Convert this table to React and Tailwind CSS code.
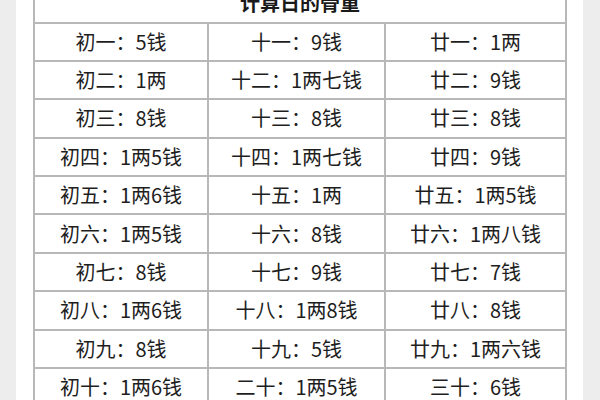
const rows = [
  ["初一：5钱", "十一：9钱", "廿一：1两"],
  ["初二：1两", "十二：1两七钱", "廿二：9钱"],
  ["初三：8钱", "十三：8钱", "廿三：8钱"],
  ["初四：1两5钱", "十四：1两七钱", "廿四：9钱"],
  ["初五：1两6钱", "十五：1两", "廿五：1两5钱"],
  ["初六：1两5钱", "十六：8钱", "廿六：1两八钱"],
  ["初七：8钱", "十七：9钱", "廿七：7钱"],
  ["初八：1两6钱", "十八：1两8钱", "廿八：8钱"],
  ["初九：8钱", "十九：5钱", "廿九：1两六钱"],
  ["初十：1两6钱", "二十：1两5钱", "三十：6钱"],
];

export default function App() {
  return (
    <div
      className="w-[600px] h-[400px] overflow-hidden bg-[#ededed] flex"
      style={{ fontFamily: '"Noto Sans CJK SC", "Noto Sans", sans-serif' }}
    >
      <div className="ml-[16px] w-[567px] bg-white pl-[17px] pr-[16px]">
        <div className="-mt-[15px] border-l-2 border-r-2 border-[#b8b8b8]">
          <div className="h-[38.5px] border-b-2 border-[#b8b8b8] flex items-center justify-center text-[20px] font-bold text-[#1a1a1a] leading-none">
            计算日的骨重
          </div>
          {rows.map((r, i) => (
            <div
              key={i}
              className="grid grid-cols-[174px_177px_1fr] h-[38.4px] border-b-2 border-[#b8b8b8]"
            >
              {r.map((c, j) => (
                <div
                  key={j}
                  className={
                    "flex items-center justify-center text-[20px] text-[#1e1e1e] leading-none " +
                    (j < 2 ? "border-r-2 border-[#b8b8b8]" : "")
                  }
                >
                  {c}
                </div>
              ))}
            </div>
          ))}
        </div>
      </div>
    </div>
  );
}
